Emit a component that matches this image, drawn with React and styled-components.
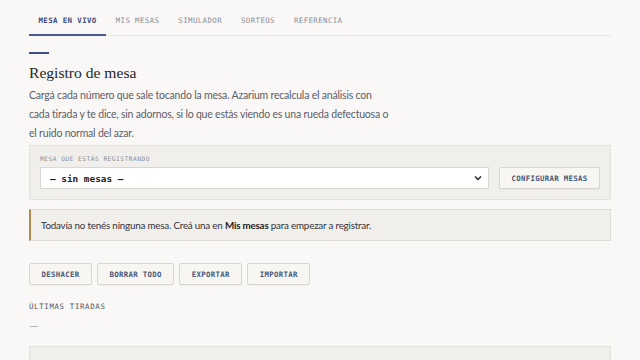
import styled, { createGlobalStyle } from "styled-components"

const GlobalStyle = createGlobalStyle`
  html, body {
    margin: 0;
    padding: 0;
    background: #f9f8f6;
  }
  body {
    font-family: Lato, "Noto Sans", sans-serif;
    color: #24242b;
  }
`

const mono = `"DejaVu Sans Mono", "Liberation Mono", monospace`

const tabs = ["MESA EN VIVO", "MIS MESAS", "SIMULADOR", "SORTEOS", "REFERENCIA"]
const actions = ["DESHACER", "BORRAR TODO", "EXPORTAR", "IMPORTAR"]

export default function App() {
  return (
    <Page>
      <GlobalStyle />
      <TabBar>
        {tabs.map((t, i) => (
          <Tab key={t} $active={i === 0}>
            {t}
          </Tab>
        ))}
      </TabBar>

      <Accent />
      <Heading>Registro de mesa</Heading>
      <Intro>
        Cargá cada número que sale tocando la mesa. Azarium recalcula el análisis con
        cada tirada y te dice, sin adornos, si lo que estás viendo es una rueda defectuosa o
        el ruido normal del azar.
      </Intro>

      <Panel>
        <Field>
          <Label>MESA QUE ESTÁS REGISTRANDO</Label>
          <SelectBox>
            <span>— sin mesas —</span>
            <svg width="8" height="6" viewBox="0 0 8 6">
              <path d="M1 1.5 L4 4.5 L7 1.5" fill="none" stroke="#222" strokeWidth="1.4" />
            </svg>
          </SelectBox>
        </Field>
        <Button>CONFIGURAR MESAS</Button>
      </Panel>

      <Notice>
        Todavía no tenés ninguna mesa. Creá una en <strong>Mis mesas</strong> para empezar a
        registrar.
      </Notice>

      <Actions>
        {actions.map((a) => (
          <Button key={a}>{a}</Button>
        ))}
      </Actions>

      <SectionLabel>ÚLTIMAS TIRADAS</SectionLabel>
      <Empty>—</Empty>
      <BottomPanel />
    </Page>
  )
}

const Page = styled.div`
  width: 582px;
  margin: 0 29px;
  padding-top: 11px;
`

const TabBar = styled.div`
  display: flex;
  border-bottom: 1px solid #e9e7e3;
`

const Tab = styled.div`
  padding: 5px 9.5px 8px;
  font-family: ${mono};
  font-size: 7.4px;
  line-height: 10px;
  letter-spacing: 0.4px;
  color: ${(p) => (p.$active ? "#3e4d7e" : "#8c8c96")};
  font-weight: ${(p) => (p.$active ? "bold" : "normal")};
  border-bottom: 2px solid ${(p) => (p.$active ? "#4a5a8c" : "transparent")};
  margin-bottom: -1px;
`

const Accent = styled.div`
  width: 20px;
  height: 2px;
  background: #3d4f8a;
  margin-top: 16px;
`

const Heading = styled.h1`
  margin: 7px 0 0;
  font-family: "Liberation Serif", Georgia, serif;
  font-weight: normal;
  font-size: 15.6px;
  line-height: 24px;
  color: #1f1f26;
`

const Intro = styled.p`
  margin: 1px 0 0;
  width: 360px;
  font-size: 10.5px;
  letter-spacing: -0.2px;
  line-height: 19px;
  color: #5d5d68;
`

const Panel = styled.div`
  margin-top: 2px;
  display: flex;
  align-items: flex-end;
  gap: 10px;
  padding: 9px 10px 10px;
  background: #f0efeb;
  border: 1px solid #e3e1dc;
`

const Field = styled.div`
  flex: 1;
  display: flex;
  flex-direction: column;
  gap: 4px;
`

const Label = styled.div`
  font-family: ${mono};
  font-size: 6.2px;
  line-height: 8px;
  letter-spacing: 0.5px;
  color: #8c8c94;
`

const SelectBox = styled.div`
  height: 22px;
  box-sizing: border-box;
  display: flex;
  align-items: center;
  justify-content: space-between;
  padding: 0 6px 0 9px;
  background: #fff;
  border: 1px solid #d9d7d1;
  font-family: ${mono};
  font-weight: bold;
  font-size: 9.4px;
  color: #222;
`

const Button = styled.div`
  height: 22px;
  box-sizing: border-box;
  display: flex;
  align-items: center;
  justify-content: center;
  padding: 0 11.5px;
  background: #f7f6f3;
  border: 1px solid #d8d6d0;
  border-radius: 2px;
  box-shadow: 0 1px 0 rgba(0, 0, 0, 0.03);
  font-family: ${mono};
  font-size: 7.4px;
  font-weight: bold;
  letter-spacing: 0.3px;
  color: #4a5878;
`

const Notice = styled.div`
  margin-top: 9px;
  padding: 0 10px;
  height: 32px;
  box-sizing: border-box;
  display: flex;
  align-items: center;
  background: #f0efeb;
  border: 1px solid #dedcd6;
  border-left: 2px solid #b08c4c;
  font-size: 9.8px;
  letter-spacing: -0.2px;
  color: #33333a;
  white-space: pre;

  strong {
    font-weight: bold;
    color: #1f1f26;
  }
`

const Actions = styled.div`
  margin-top: 22px;
  display: flex;
  gap: 5px;
`

const SectionLabel = styled.div`
  margin-top: 17px;
  font-family: ${mono};
  font-size: 7.4px;
  line-height: 10px;
  letter-spacing: 0.65px;
  color: #55555e;
`

const Empty = styled.div`
  margin-top: 7px;
  font-size: 12px;
  line-height: 14px;
  color: #a3a3aa;
`

const BottomPanel = styled.div`
  margin-top: 13px;
  height: 40px;
  background: #f0efeb;
  border: 1px solid #e3e1dc;
`
